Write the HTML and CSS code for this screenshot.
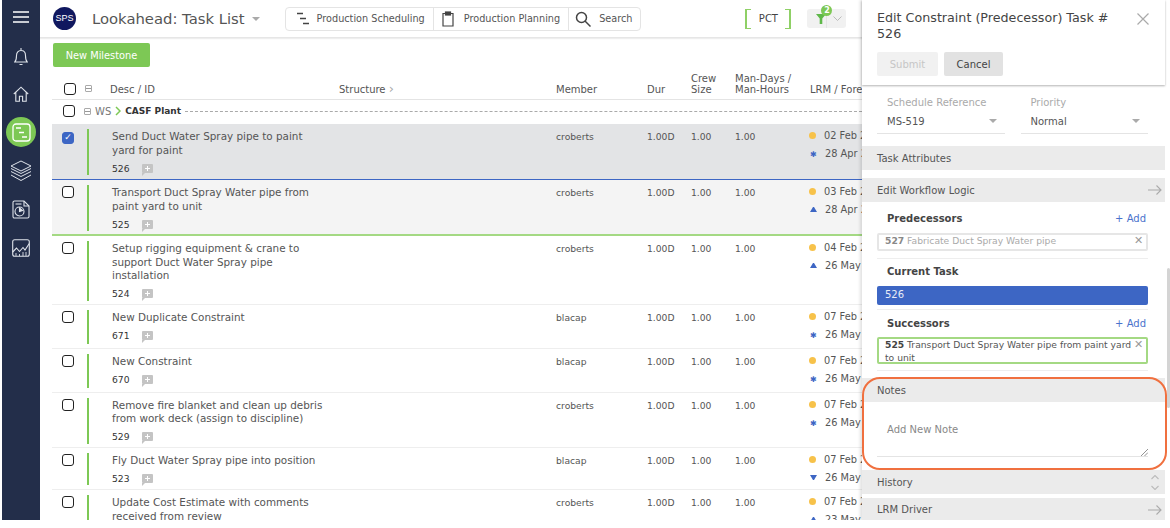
FILE: index.html
```html
<!DOCTYPE html>
<html>
    <head>
        <meta http-equiv="content-type" content="text/html;charset=utf-8">
        <title>Lookahead: Task List</title>
        <link rel="stylesheet" href="styles.css">
    </head>
    <body>
        <div class="app">
            <!-- sidebar -->
            <nav class="side">
                <svg class="menu" width="16" height="12" viewBox="0 0 16 12"><path d="M0 1h16M0 6h16M0 11h16" stroke="#fff" stroke-width="1.6"/></svg>
                <svg class="bell" width="14" height="19" viewBox="0 0 14 19" fill="none" stroke="#dfe3ea" stroke-width="1.100"><path d="M.8 15c1.400-1.500 1.700-3 1.700-6.500 0-3 1.800-5 4.500-5s4.500 2 4.500 5c0 3.500.3 5 1.700 6.500zM7 1v2.500M5.500 17.500h3"/></svg>
                <svg class="home" width="16" height="16" viewBox="0 0 16 16" fill="none" stroke="#dfe3ea" stroke-width="1.100"><path d="M.8 8 8 1.200 15.200 8M2.800 6.500v8.800h3.600v-5h3.200v5h3.600V6.500"/></svg>
                <div class="nav-active">
                    <svg width="19" height="19" viewBox="0 0 19 19" fill="none" stroke="#fff" stroke-width="1.300"><rect x="1" y="1" width="17" height="17" rx="3"/><path d="M4 5h5M7 9.500h5M10 14h5" stroke-width="1.600"/></svg>
                </div>
                <svg class="layers" width="22" height="22" viewBox="0 0 22 22" fill="none" stroke="#dfe3ea" stroke-width="1"><path d="M11 1 21 6 11 11 1 6zM1 8.500l10 5 10-5M1 11.500l10 5 10-5M1 15l10 5.500L21 15"/></svg>
                <svg class="clock" width="18" height="19" viewBox="0 0 18 19" fill="none" stroke="#dfe3ea" stroke-width="1.100"><path d="M1 4V2.500C1 1.600 1.600 1 2.500 1H12l5 5v10.500c0 .9-.6 1.500-1.500 1.500h-13C1.600 18 1 17.400 1 16.500V4"/><path d="M12 1v5h5"/><circle cx="7.500" cy="11.500" r="4.500"/><path d="M7.500 8v3.500l3-1z" fill="#dfe3ea"/><path d="M3.500 4h6"/></svg>
                <svg class="chart" width="18" height="18" viewBox="0 0 18 18" fill="none" stroke="#dfe3ea" stroke-width="1.100"><rect x=".7" y=".7" width="16.600" height="16.600" rx="2"/><path d="M.7 13 4.500 9l3 3.500L11 8.500l2 2.500 4.300-6.500"/><path d="M4 14v3M7.500 15v2M11 13v4M14 13v4" stroke-width=".9"/></svg>
            </nav>

            <!-- list -->
            <main class="main">
                <header class="top">
                    <div class="logo">SPS</div>
                    <h1 class="page-title">Lookahead: Task List</h1>
                    <span class="caret title-caret"></span>
                    <div class="tabs">
                        <div class="tab">
                            <svg width="14" height="13" viewBox="0 0 14 13"><path d="M1 1.500h6M4 6.500h6M7 11.500h6" stroke="#444" stroke-width="1.600"/></svg>
                            <span>Production Scheduling</span>
                        </div>
                        <div class="tab">
                            <svg width="12" height="16" viewBox="0 0 12 16" fill="none" stroke="#444" stroke-width="1.200"><path d="M3.500 2.500H1v12.500h10V2.500H8.500"/><rect x="3.500" y="1" width="5" height="3" fill="#444"/></svg>
                            <span>Production Planning</span>
                        </div>
                        <div class="tab">
                            <svg width="16" height="16" viewBox="0 0 16 16" fill="none" stroke="#444" stroke-width="1.500"><circle cx="6.500" cy="6.500" r="5"/><path d="m10 10 5.500 5.500"/></svg>
                            <span>Search</span>
                        </div>
                    </div>
                    <div class="pct">PCT</div>
                    <div class="filter">
                        <svg width="10" height="10" viewBox="0 0 10 10"><path d="M0 0h10L6.300 4.500V10H3.700V4.500z" fill="#5fb84a"/></svg>
                        <svg class="filter-down" width="9" height="6" viewBox="0 0 9 6" fill="none" stroke="#bbb"><path d="m.5.500 4 4 4-4"/></svg>
                        <span class="badge">2</span>
                    </div>
                </header>

                <div class="tools">
                    <button class="btn-green">New Milestone</button>
                </div>

                <div class="grid head">
                    <div class="check-cell"><span class="box thick"></span><span class="minus"></span></div>
                    <div class="head-desc">Desc / ID</div>
                    <div>Structure <span class="chev">&#8250;</span></div>
                    <div>Member</div>
                    <div>Dur</div>
                    <div>Crew<br>Size</div>
                    <div>Man-Days /<br>Man-Hours</div>
                    <div class="nowrap">LRM / Forecast</div>
                </div>

                <div class="group">
                    <span class="box thick"></span>
                    <span class="minus"></span>
                    <span class="ws">WS</span>
                    <svg width="6" height="10" viewBox="0 0 6 10" fill="none" stroke="#7dc855" stroke-width="1.500"><path d="m1 1 4 4-4 4"/></svg>
                    <b>CASF Plant</b>
                    <span class="dash"></span>
                </div>

                <div class="grid row selected">
                    <div class="check-cell"><span class="box on">&#10003;</span><span class="bar"></span></div>
                    <div class="desc"><p>Send Duct Water Spray pipe to paint yard for paint</p><div class="id">526 <span class="note"></span></div></div>
                    <div></div><div>croberts</div><div>1.00D</div><div>1.00</div><div>1.00</div>
                    <div class="dates"><div><i class="dot"></i>02 Feb 2021</div><div><i class="star">&#10033;</i>28 Apr 2021</div></div>
                </div>
                <div class="grid row successor">
                    <div class="check-cell"><span class="box"></span><span class="bar"></span></div>
                    <div class="desc"><p>Transport Duct Spray Water pipe from paint yard to unit</p><div class="id">525 <span class="note"></span></div></div>
                    <div></div><div>croberts</div><div>1.00D</div><div>1.00</div><div>1.00</div>
                    <div class="dates"><div><i class="dot"></i>03 Feb 2021</div><div><i class="up"></i>28 Apr 2021</div></div>
                </div>
                <div class="grid row short">
                    <div class="check-cell"><span class="box"></span><span class="bar"></span></div>
                    <div class="desc"><p>Setup rigging equipment &amp; crane to support Duct Water Spray pipe installation</p><div class="id">524 <span class="note"></span></div></div>
                    <div></div><div>croberts</div><div>1.00D</div><div>1.00</div><div>1.00</div>
                    <div class="dates"><div><i class="dot"></i>04 Feb 2021</div><div><i class="up"></i>26 May 2021</div></div>
                </div>
                <div class="grid row tall">
                    <div class="check-cell"><span class="box"></span><span class="bar"></span></div>
                    <div class="desc"><p>New Duplicate Constraint</p><div class="id">671 <span class="note"></span></div></div>
                    <div></div><div>blacap</div><div>1.00D</div><div>1.00</div><div>1.00</div>
                    <div class="dates"><div><i class="dot"></i>07 Feb 2021</div><div><i class="star">&#10033;</i>26 May 2021</div></div>
                </div>
                <div class="grid row tall">
                    <div class="check-cell"><span class="box"></span><span class="bar"></span></div>
                    <div class="desc"><p>New Constraint</p><div class="id">670 <span class="note"></span></div></div>
                    <div></div><div>blacap</div><div>1.00D</div><div>1.00</div><div>1.00</div>
                    <div class="dates"><div><i class="dot"></i>07 Feb 2021</div><div><i class="star">&#10033;</i>26 May 2021</div></div>
                </div>
                <div class="grid row short">
                    <div class="check-cell"><span class="box"></span><span class="bar"></span></div>
                    <div class="desc"><p>Remove fire blanket and clean up debris from work deck (assign to discipline)</p><div class="id">529 <span class="note"></span></div></div>
                    <div></div><div>croberts</div><div>1.00D</div><div>1.00</div><div>1.00</div>
                    <div class="dates"><div><i class="dot"></i>07 Feb 2021</div><div><i class="star">&#10033;</i>26 May 2021</div></div>
                </div>
                <div class="grid row">
                    <div class="check-cell"><span class="box"></span><span class="bar"></span></div>
                    <div class="desc"><p>Fly Duct Water Spray pipe into position</p><div class="id">523 <span class="note"></span></div></div>
                    <div></div><div>blacap</div><div>1.00D</div><div>1.00</div><div>1.00</div>
                    <div class="dates"><div><i class="dot"></i>07 Feb 2021</div><div><i class="down"></i>26 May 2021</div></div>
                </div>
                <div class="grid row">
                    <div class="check-cell"><span class="box"></span><span class="bar"></span></div>
                    <div class="desc"><p>Update Cost Estimate with comments received from review</p><div class="id">522 <span class="note"></span></div></div>
                    <div></div><div>croberts</div><div>1.00D</div><div>1.00</div><div>1.00</div>
                    <div class="dates"><div><i class="dot"></i>07 Feb 2021</div><div><i class="up"></i>23 May 2021</div></div>
                </div>
            </main>

            <!-- edit panel -->
            <aside class="panel">
                <div class="panel-head">
                    <div class="panel-title">
                        <h2>Edit Constraint (Predecessor) Task # 526</h2>
                        <svg width="12" height="12" viewBox="0 0 12 12" stroke="#aaa" stroke-width="1.200"><path d="m.5.500 11 11M11.500.500l-11 11"/></svg>
                    </div>
                    <div class="panel-btns">
                        <button class="btn-off">Submit</button>
                        <button class="btn-cancel">Cancel</button>
                    </div>
                </div>
                <div class="panel-body">
                    <div class="fields">
                        <div class="field">
                            <label>Schedule Reference</label>
                            <div class="select">MS-519<span class="caret"></span></div>
                        </div>
                        <div class="field">
                            <label>Priority</label>
                            <div class="select">Normal<span class="caret"></span></div>
                        </div>
                    </div>
                    <div class="section attrs">Task Attributes</div>
                    <div class="section workflow">Edit Workflow Logic
                        <svg width="14" height="10" viewBox="0 0 14 10" fill="none" stroke="#aaa" stroke-width="1.100"><path d="M0 5h13M8.500.500 13 5 8.500 9.500"/></svg>
                    </div>
                    <div class="logic first">
                        <div class="logic-title"><b>Predecessors</b><span class="add">+ Add</span></div>
                        <div class="chip pred"><span><b>527</b> Fabricate Duct Spray Water pipe</span><span class="chip-x">&#10005;</span></div>
                    </div>
                    <div class="logic">
                        <div class="logic-title"><b>Current Task</b></div>
                        <div class="current">526</div>
                    </div>
                    <div class="logic last">
                        <div class="logic-title"><b>Successors</b><span class="add">+ Add</span></div>
                        <div class="chip succ"><span><b>525</b> Transport Duct Spray Water pipe from paint yard to unit</span><span class="chip-x">&#10005;</span></div>
                    </div>
                    <div class="section notes-head">Notes</div>
                    <div class="note-box">
                        <span>Add New Note</span>
                        <svg class="grip" width="7" height="7" viewBox="0 0 7 7" stroke="#777" stroke-width=".8"><path d="m0 7 7-7M3.500 7 7 3.500"/></svg>
                    </div>
                    <div class="section history">History
                        <svg width="8" height="15" viewBox="0 0 8 15" fill="none" stroke="#bbb" stroke-width="1.100"><path d="m.5 4 3.500-3.500L7.500 4M.5 11 4 14.500 7.500 11"/></svg>
                    </div>
                    <div class="section driver">LRM Driver
                        <svg width="14" height="10" viewBox="0 0 14 10" fill="none" stroke="#aaa" stroke-width="1.100"><path d="M0 5h13M8.500.500 13 5 8.500 9.500"/></svg>
                    </div>
                </div>
                <div class="scroll"></div>
                <!-- callout -->
                <div class="callout"></div>
            </aside>
        </div>
    </body>
</html>
```

FILE: styles.css
```css
* {
    box-sizing: border-box;
}
html, body {
    margin: 0;
    height: 100%;
    background: #fff;
}
body {
    font-family: "DejaVu Sans", Verdana, sans-serif;
    font-size: 10px;
    color: #555;
}
p, h1, h2 {
    margin: 0;
    font-weight: normal;
}
button {
    font: inherit;
    border: 0;
    border-radius: 2px;
}
.app {
    display: flex;
    height: 520px;
    overflow: hidden;
}

/* sidebar */
.side {
    flex: 0 0 38px;
    margin-left: 2px;
    background: #232e4a;
    display: flex;
    flex-direction: column;
    align-items: center;
}
.menu { margin-top: 11px; }
.bell { margin-top: 24px; }
.home { margin-top: 20px; }
.nav-active {
    width: 30px;
    height: 30px;
    margin-top: 15px;
    border-radius: 50%;
    background: #7dc855;
    display: flex;
    align-items: center;
    justify-content: center;
}
.layers { margin-top: 13px; }
.clock { margin-top: 18px; }
.chart { margin-top: 20px; }

/* main list */
.main {
    flex: 1 1 0;
    min-width: 0;
    overflow: hidden;
}
.top {
    height: 38px;
    display: flex;
    align-items: center;
    padding-left: 13px;
    border-bottom: 1px solid #e6e6e6;
    box-shadow: 0 1px 1px #eee;
}
.logo {
    width: 23px;
    height: 23px;
    border-radius: 50%;
    background: #10185f;
    color: #fff;
    font-family: "Liberation Sans", sans-serif;
    font-size: 9px;
    line-height: 23px;
    text-align: center;
}
.page-title {
    margin-left: 16px;
    font-size: 14.800px;
    color: #555;
    white-space: nowrap;
}
.caret {
    width: 0;
    height: 0;
    border: 4px solid transparent;
    border-top: 4px solid #aaa;
    border-bottom: 0;
}
.title-caret {
    margin-left: 7px;
}
.tabs {
    display: flex;
    height: 24px;
    margin-left: 25px;
    border: 1px solid #e4e4e4;
    border-radius: 4px;
    font-size: 9.700px;
}
.tab {
    display: flex;
    align-items: center;
    gap: 8px;
    padding: 0 8px;
    white-space: nowrap;
    border-left: 1px solid #e4e4e4;
}
.tab:first-child {
    border-left: 0;
    gap: 7px;
    padding-left: 10px;
}
.tab:nth-child(2) {
    gap: 10px;
}
.tab:last-child {
    padding: 0 8px 0 6px;
}
.pct {
    position: relative;
    width: 46px;
    height: 20px;
    margin-left: 104px;
    line-height: 20px;
    text-align: center;
    font-size: 10px;
    color: #444;
}
.pct::before, .pct::after {
    content: "";
    position: absolute;
    top: 0;
    bottom: 0;
    width: 4px;
    border: 2px solid #8fd066;
    border-width: 1px 0;
}
.pct::before {
    left: 0;
    border-left-width: 2px;
}
.pct::after {
    right: 0;
    border-right-width: 2px;
}
.filter {
    position: relative;
    display: flex;
    align-items: center;
    gap: 7px;
    width: 39px;
    height: 19px;
    margin-left: 16px;
    padding-left: 9px;
    background: linear-gradient(#e4e4e4, #e4e4e4) 19px 0 / 1px 100% no-repeat, #f1f1f1;
    border-radius: 3px;
}
.badge {
    position: absolute;
    top: -4px;
    left: 14px;
    width: 11px;
    height: 11px;
    border-radius: 50%;
    background: #7dc855;
    color: #fff;
    font-size: 8px;
    font-weight: bold;
    line-height: 11px;
    text-align: center;
}
.tools {
    padding: 5px 0 0 13px;
}
.btn-green {
    width: 97px;
    height: 24px;
    background: #7dc855;
    color: #fff;
    font-size: 9.800px;
}

/* table */
.grid {
    display: grid;
    grid-template-columns: 60px 227px 217px 91px 44px 44px 75px 120px;
    margin-left: 12px;
}
.head {
    height: 33px;
    align-items: end;
    padding-bottom: 4px;
    border-bottom: 1px solid #e4e4e4;
    line-height: 11px;
}
.head-desc {
    margin-left: -2px;
}
.check-cell {
    position: relative;
    height: 100%;
}
.head .check-cell {
    display: flex;
    align-items: center;
    gap: 9px;
    height: 13px;
    padding-left: 12px;
}
.box {
    display: inline-block;
    flex: none;
    width: 12px;
    height: 12px;
    border: 1.500px solid #222;
    border-radius: 3px;
    background: #fff;
}
.box.on {
    background: #3d66c4;
    border-color: #3d66c4;
    color: #fff;
    font-size: 9px;
    line-height: 9px;
    text-align: center;
}
.minus {
    display: inline-block;
    flex: none;
    width: 7px;
    height: 7px;
    border: 1px solid #aaa;
    border-radius: 1px;
    background: linear-gradient(#999, #999) center / 5px 1px no-repeat;
}
.chev {
    color: #aaa;
    font-size: 13px;
    line-height: 8px;
}
.nowrap {
    white-space: nowrap;
}
.group {
    display: flex;
    align-items: center;
    gap: 4px;
    height: 24px;
    margin-left: 12px;
    padding: 0 0 2px 11px;
    color: #777;
}
.group .minus {
    margin-left: 5px;
}
.group b {
    font-size: 9px;
    color: #333;
}
.dash {
    flex: 1;
    border-top: 1px dashed #aaa;
}
.row {
    padding: 6px 0 4px;
    font-size: 9.200px;
    line-height: 13.500px;
    border-bottom: 1px solid #eee;
}
.row.tall {
    min-height: 44px;
}
.row.short {
    padding-bottom: 3px;
}
.row.selected {
    background: #e3e4e6;
    border-bottom: 1px solid #3d66c4;
}
.row.successor {
    background: #f4f4f4;
    padding-bottom: 3px;
    border-bottom: 2px solid #a4d983;
}
.row .check-cell {
    padding-left: 10px;
}
.bar {
    position: absolute;
    left: 35px;
    top: -1px;
    bottom: 0;
    width: 2px;
    background: #7dc855;
}
.desc p {
    width: 216px;
    font-size: 10.400px;
    color: #555;
}
.id {
    display: flex;
    align-items: center;
    gap: 12px;
    margin-top: 4.500px;
    color: #333;
}
.note {
    position: relative;
    width: 11px;
    height: 9px;
    background: linear-gradient(#fff, #fff) center / 5px 1px no-repeat, linear-gradient(#fff, #fff) center / 1px 5px no-repeat, #c4c4c4;
    border-radius: 1px;
}
.note::after {
    content: "";
    position: absolute;
    left: 0;
    top: 9px;
    border-top: 3px solid #c4c4c4;
    border-right: 3px solid transparent;
}
.dates {
    white-space: nowrap;
    line-height: 18px;
    margin: -3px 0 -8px;
    font-size: 9.800px;
}
.dates i {
    display: inline-block;
    font-style: normal;
    width: 7px;
    margin-left: -1px;
    margin-right: 8px;
}
.dates i.star {
    margin-left: 0;
}
.dot {
    height: 7px;
    background: #f7c24a;
    border-radius: 50%;
}
.star {
    color: #3d66c4;
    font-size: 8px;
}
.dates i.up, .dates i.down {
    margin-left: 0;
    height: 0;
    border: 3.500px solid transparent;
    vertical-align: 1px;
}
.dates i.up {
    border-top: 0;
    border-bottom: 5px solid #3d66c4;
}
.dates i.down {
    border-bottom: 0;
    border-top: 5px solid #3d66c4;
}

/* panel */
.panel {
    position: relative;
    flex: 0 0 308px;
    background: #fff;
    box-shadow: -2px 0 3px rgba(0, 0, 0, .12);
    z-index: 2;
}
.panel-head {
    height: 85px;
    padding: 10px 15px 0;
    margin-right: 5px;
    box-shadow: 0 1px 2px rgba(0, 0, 0, .3);
}
.panel-title {
    display: flex;
    justify-content: space-between;
    align-items: flex-start;
}
.panel-title svg {
    margin-top: 3px;
    margin-right: 1px;
    flex: none;
}
.panel-title h2 {
    width: 245px;
    font-size: 12.700px;
    line-height: 16px;
    color: #444;
}
.panel-btns {
    display: flex;
    gap: 6px;
    margin-top: 10px;
}
.btn-off {
    width: 61px;
    height: 24px;
    background: #f1f1f1;
    color: #c6c6c6;
}
.btn-cancel {
    width: 59px;
    height: 24px;
    background: #e2e2e2;
    color: #444;
}
.panel-body {
    margin-right: 5px;
}
.fields {
    display: flex;
    gap: 16px;
    padding: 12px 17px 12px 15px;
}
.field {
    flex: 1;
}
.field label {
    display: block;
    padding-left: 10px;
    color: #aaa;
    line-height: 12px;
}
.select {
    display: flex;
    align-items: center;
    justify-content: space-between;
    height: 25px;
    padding: 0 8px 0 10px;
    color: #555;
    border-bottom: 1px solid #e4e4e4;
}
.section {
    display: flex;
    align-items: center;
    justify-content: space-between;
    height: 24px;
    margin-bottom: 7px;
    padding: 0 3px 0 15px;
    background: #ebebeb;
}
.attrs {
    margin-bottom: 8px;
}
.workflow {
    margin-bottom: 0;
}
.logic {
    margin: 0 17px 0 15px;
    padding-top: 6.500px;
    padding-bottom: 4.500px;
    border-bottom: 1px solid #eee;
}
.logic.first {
    padding-top: 10px;
    padding-bottom: 7px;
}
.logic.last {
    margin-bottom: 7px;
    padding-bottom: 6px;
}
.logic-title {
    display: flex;
    justify-content: space-between;
    padding: 0 2px 0 10px;
    line-height: 13px;
    margin-bottom: 7.500px;
    color: #444;
}
.add {
    color: #4a72cc;
}
.chip {
    display: flex;
    justify-content: space-between;
    padding: 0 3px 0 6px;
    line-height: 12.500px;
    border: 2px solid #e6e6e6;
    border-radius: 2px;
    font-size: 9.200px;
}
.pred {
    height: 18px;
    color: #aaa;
}
.pred b {
    color: #888;
}
.succ {
    height: 27px;
    color: #555;
    border-color: #a4d983;
}
.succ b {
    color: #444;
}
.chip-x {
    flex: none;
    width: 9px;
    color: #999;
    font-size: 11px;
}
.current {
    height: 19px;
    padding-left: 8px;
    background: #3d66c4;
    color: #e8ecf7;
    border-radius: 2px;
    line-height: 18px;
}
.notes-head {
    margin-bottom: 0;
}
.note-box {
    position: relative;
    height: 41px;
    margin: 14px 17px 13px 15px;
    padding: 8px 10px;
    color: #888;
    border-bottom: 1px solid #e4e4e4;
}
.grip {
    position: absolute;
    right: 0;
    bottom: 0;
}
.history {
    margin-bottom: 4px;
    padding-right: 6px;
}
.driver {
    height: 23px;
    margin-bottom: 0;
}
.scroll {
    position: absolute;
    top: 268px;
    right: 0;
    width: 3px;
    height: 140px;
    background: #d4d4d4;
    border-radius: 2px;
}
.callout {
    position: absolute;
    top: 377px;
    left: 0;
    width: 305px;
    height: 93px;
    border: 2px solid #f0703f;
    border-radius: 18px;
}
```
